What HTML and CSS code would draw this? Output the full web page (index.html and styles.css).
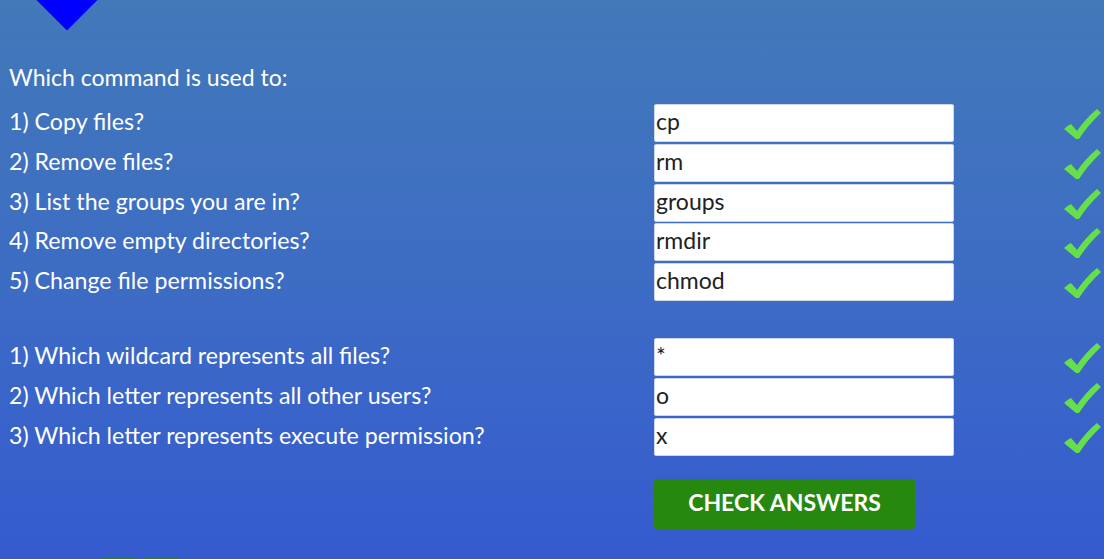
FILE: index.html
```html
<!DOCTYPE html>
<html>
<head>
<meta charset="utf-8">
<link rel="stylesheet" href="styles.css">
</head>
<body>
<div class="page">
  <div class="top">
    <div class="diamond"><span class="dmark"></span></div>
  </div>
  <p class="intro">Which command is used to:</p>
  <div class="group">
    <div class="row"><span class="q">1) Copy files?</span><input class="ans" value="cp"><span class="check"><svg viewBox="0 0 40 36"><path d="M2 24 Q6 20 9 19 L15 26 Q24 13 35 4 L39 8 Q26 20 17 34 L14 34 Z" fill="#66e04a"/></svg></span></div>
    <div class="row"><span class="q">2) Remove files?</span><input class="ans" value="rm"><span class="check"><svg viewBox="0 0 40 36"><path d="M2 24 Q6 20 9 19 L15 26 Q24 13 35 4 L39 8 Q26 20 17 34 L14 34 Z" fill="#66e04a"/></svg></span></div>
    <div class="row"><span class="q">3) List the groups you are in?</span><input class="ans" value="groups"><span class="check"><svg viewBox="0 0 40 36"><path d="M2 24 Q6 20 9 19 L15 26 Q24 13 35 4 L39 8 Q26 20 17 34 L14 34 Z" fill="#66e04a"/></svg></span></div>
    <div class="row"><span class="q">4) Remove empty directories?</span><input class="ans" value="rmdir"><span class="check"><svg viewBox="0 0 40 36"><path d="M2 24 Q6 20 9 19 L15 26 Q24 13 35 4 L39 8 Q26 20 17 34 L14 34 Z" fill="#66e04a"/></svg></span></div>
    <div class="row"><span class="q">5) Change file permissions?</span><input class="ans" value="chmod"><span class="check"><svg viewBox="0 0 40 36"><path d="M2 24 Q6 20 9 19 L15 26 Q24 13 35 4 L39 8 Q26 20 17 34 L14 34 Z" fill="#66e04a"/></svg></span></div>
  </div>
  <div class="group second">
    <div class="row"><span class="q">1) Which wildcard represents all files?</span><input class="ans" value="*"><span class="check"><svg viewBox="0 0 40 36"><path d="M2 24 Q6 20 9 19 L15 26 Q24 13 35 4 L39 8 Q26 20 17 34 L14 34 Z" fill="#66e04a"/></svg></span></div>
    <div class="row"><span class="q">2) Which letter represents all other users?</span><input class="ans" value="o"><span class="check"><svg viewBox="0 0 40 36"><path d="M2 24 Q6 20 9 19 L15 26 Q24 13 35 4 L39 8 Q26 20 17 34 L14 34 Z" fill="#66e04a"/></svg></span></div>
    <div class="row"><span class="q">3) Which letter represents execute permission?</span><input class="ans" value="x"><span class="check"><svg viewBox="0 0 40 36"><path d="M2 24 Q6 20 9 19 L15 26 Q24 13 35 4 L39 8 Q26 20 17 34 L14 34 Z" fill="#66e04a"/></svg></span></div>
  </div>
  <div class="actions">
    <button class="btn">CHECK ANSWERS</button>
  </div>
  <div class="nav">
    <span class="navbtn"></span>
    <span class="navbtn"></span>
  </div>
</div>
</body>
</html>
```
FILE: styles.css
```css
html, body {
  margin: 0;
  padding: 0;
  height: 100%;
  overflow: hidden;
}
body {
  background: linear-gradient(to bottom, #4279b9 0%, #3d6cc4 50%, #355bcf 100%);
  font-family: Lato, "Liberation Sans", sans-serif;
  color: #fff;
}
.page {
  padding: 0 2px 0 9px;
}
.top {
  height: 57px;
  position: relative;
}
.diamond {
  position: absolute;
  left: 35px;
  top: -25px;
  width: 46px;
  height: 46px;
  background: #0000ff;
  transform: rotate(45deg);
}
.dmark {
  position: absolute;
  left: 4px;
  top: 10px;
  width: 7px;
  height: 3px;
  background: #fff;
  transform: rotate(-45deg);
}
.intro {
  margin: 0 0 7px 0;
  font-size: 23px;
  line-height: 40px;
}
.group {
  display: flex;
  flex-direction: column;
  gap: 1.8px;
}
.group.second {
  margin-top: 37px;
}
.row {
  display: flex;
  align-items: center;
  height: 38px;
}
.q {
  width: 645px;
  font-size: 23.2px;
  margin-bottom: 4px;
}
.ans {
  box-sizing: border-box;
  width: 300px;
  height: 38px;
  margin: 0;
  padding: 0 1px 4px 1px;
  border: 1px solid #cfd6e6;
  border-radius: 2px;
  background: #fff;
  font-family: Lato, "Liberation Sans", sans-serif;
  font-size: 23px;
  color: #222;
  outline: none;
}
.check {
  margin-left: auto;
  width: 40px;
  height: 36px;
  display: flex;
}
.check svg {
  width: 40px;
  height: 36px;
}
.actions {
  margin-top: 23px;
  padding-left: 645px;
  display: flex;
}
.btn {
  width: 261px;
  height: 50px;
  border: none;
  border-radius: 3px;
  background: #26880f;
  color: #fff;
  font-family: Lato, "Liberation Sans", sans-serif;
  font-weight: bold;
  font-size: 23px;
  padding: 0 0 4px 0;
}
.nav {
  margin-top: 29px;
  padding-left: 92px;
  display: flex;
  gap: 6px;
}
.navbtn {
  width: 36px;
  height: 30px;
  background: #26880f;
  border-radius: 2px;
}
```
